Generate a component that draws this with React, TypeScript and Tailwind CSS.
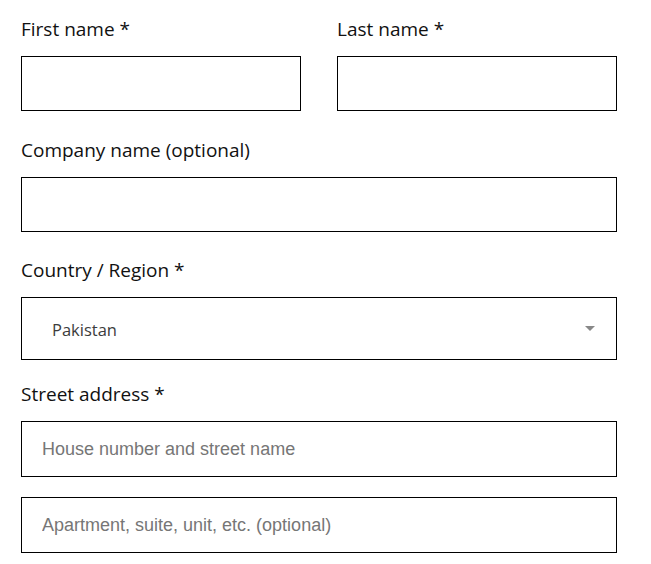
import React from "react";

const labelCls = "block pt-[2px] text-[19px] leading-[27px] text-[#111111] [font-family:'Open_Sans',sans-serif]";
const inputBase =
  "block w-full border border-black bg-white px-[20px] text-[18px] text-[#333] placeholder:text-[#767676] outline-none [font-family:'Liberation_Sans',Arial,sans-serif]";

export default function App() {
  return (
    <div className="bg-white min-h-[564px] w-[651px] pl-[21px] pt-[14px]">
      <div className="w-[596px]">
        <div className="grid grid-cols-2 gap-x-[36px]">
          <div>
            <label className={labelCls}>First name *</label>
            <input className={inputBase + " h-[55px] mt-[13px]"} />
          </div>
          <div>
            <label className={labelCls}>Last name *</label>
            <input className={inputBase + " h-[55px] mt-[13px]"} />
          </div>
        </div>

        <div className="mt-[24px]">
          <label className={labelCls}>Company name (optional)</label>
          <input className={inputBase + " h-[55px] mt-[13px]"} />
        </div>

        <div className="mt-[23px]">
          <label className={labelCls}>Country / Region *</label>
          <div className="mt-[13px] h-[63px] border border-black flex items-center justify-between pl-[30px] pr-[21px]">
            <span className="pt-[3px] text-[16.5px] text-[#3c3c3c] [font-family:'Open_Sans',sans-serif]">Pakistan</span>
            <span className="block w-0 h-0 border-l-[5px] border-r-[5px] border-t-[5px] border-l-transparent border-r-transparent border-t-[#888888]" />
          </div>
        </div>

        <div className="mt-[19px]">
          <label className={labelCls}>Street address *</label>
          <input className={inputBase + " h-[56px] mt-[13px]"} placeholder="House number and street name" />
          <input className={inputBase + " h-[56px] mt-[20px]"} placeholder="Apartment, suite, unit, etc. (optional)" />
        </div>
      </div>
    </div>
  );
}
